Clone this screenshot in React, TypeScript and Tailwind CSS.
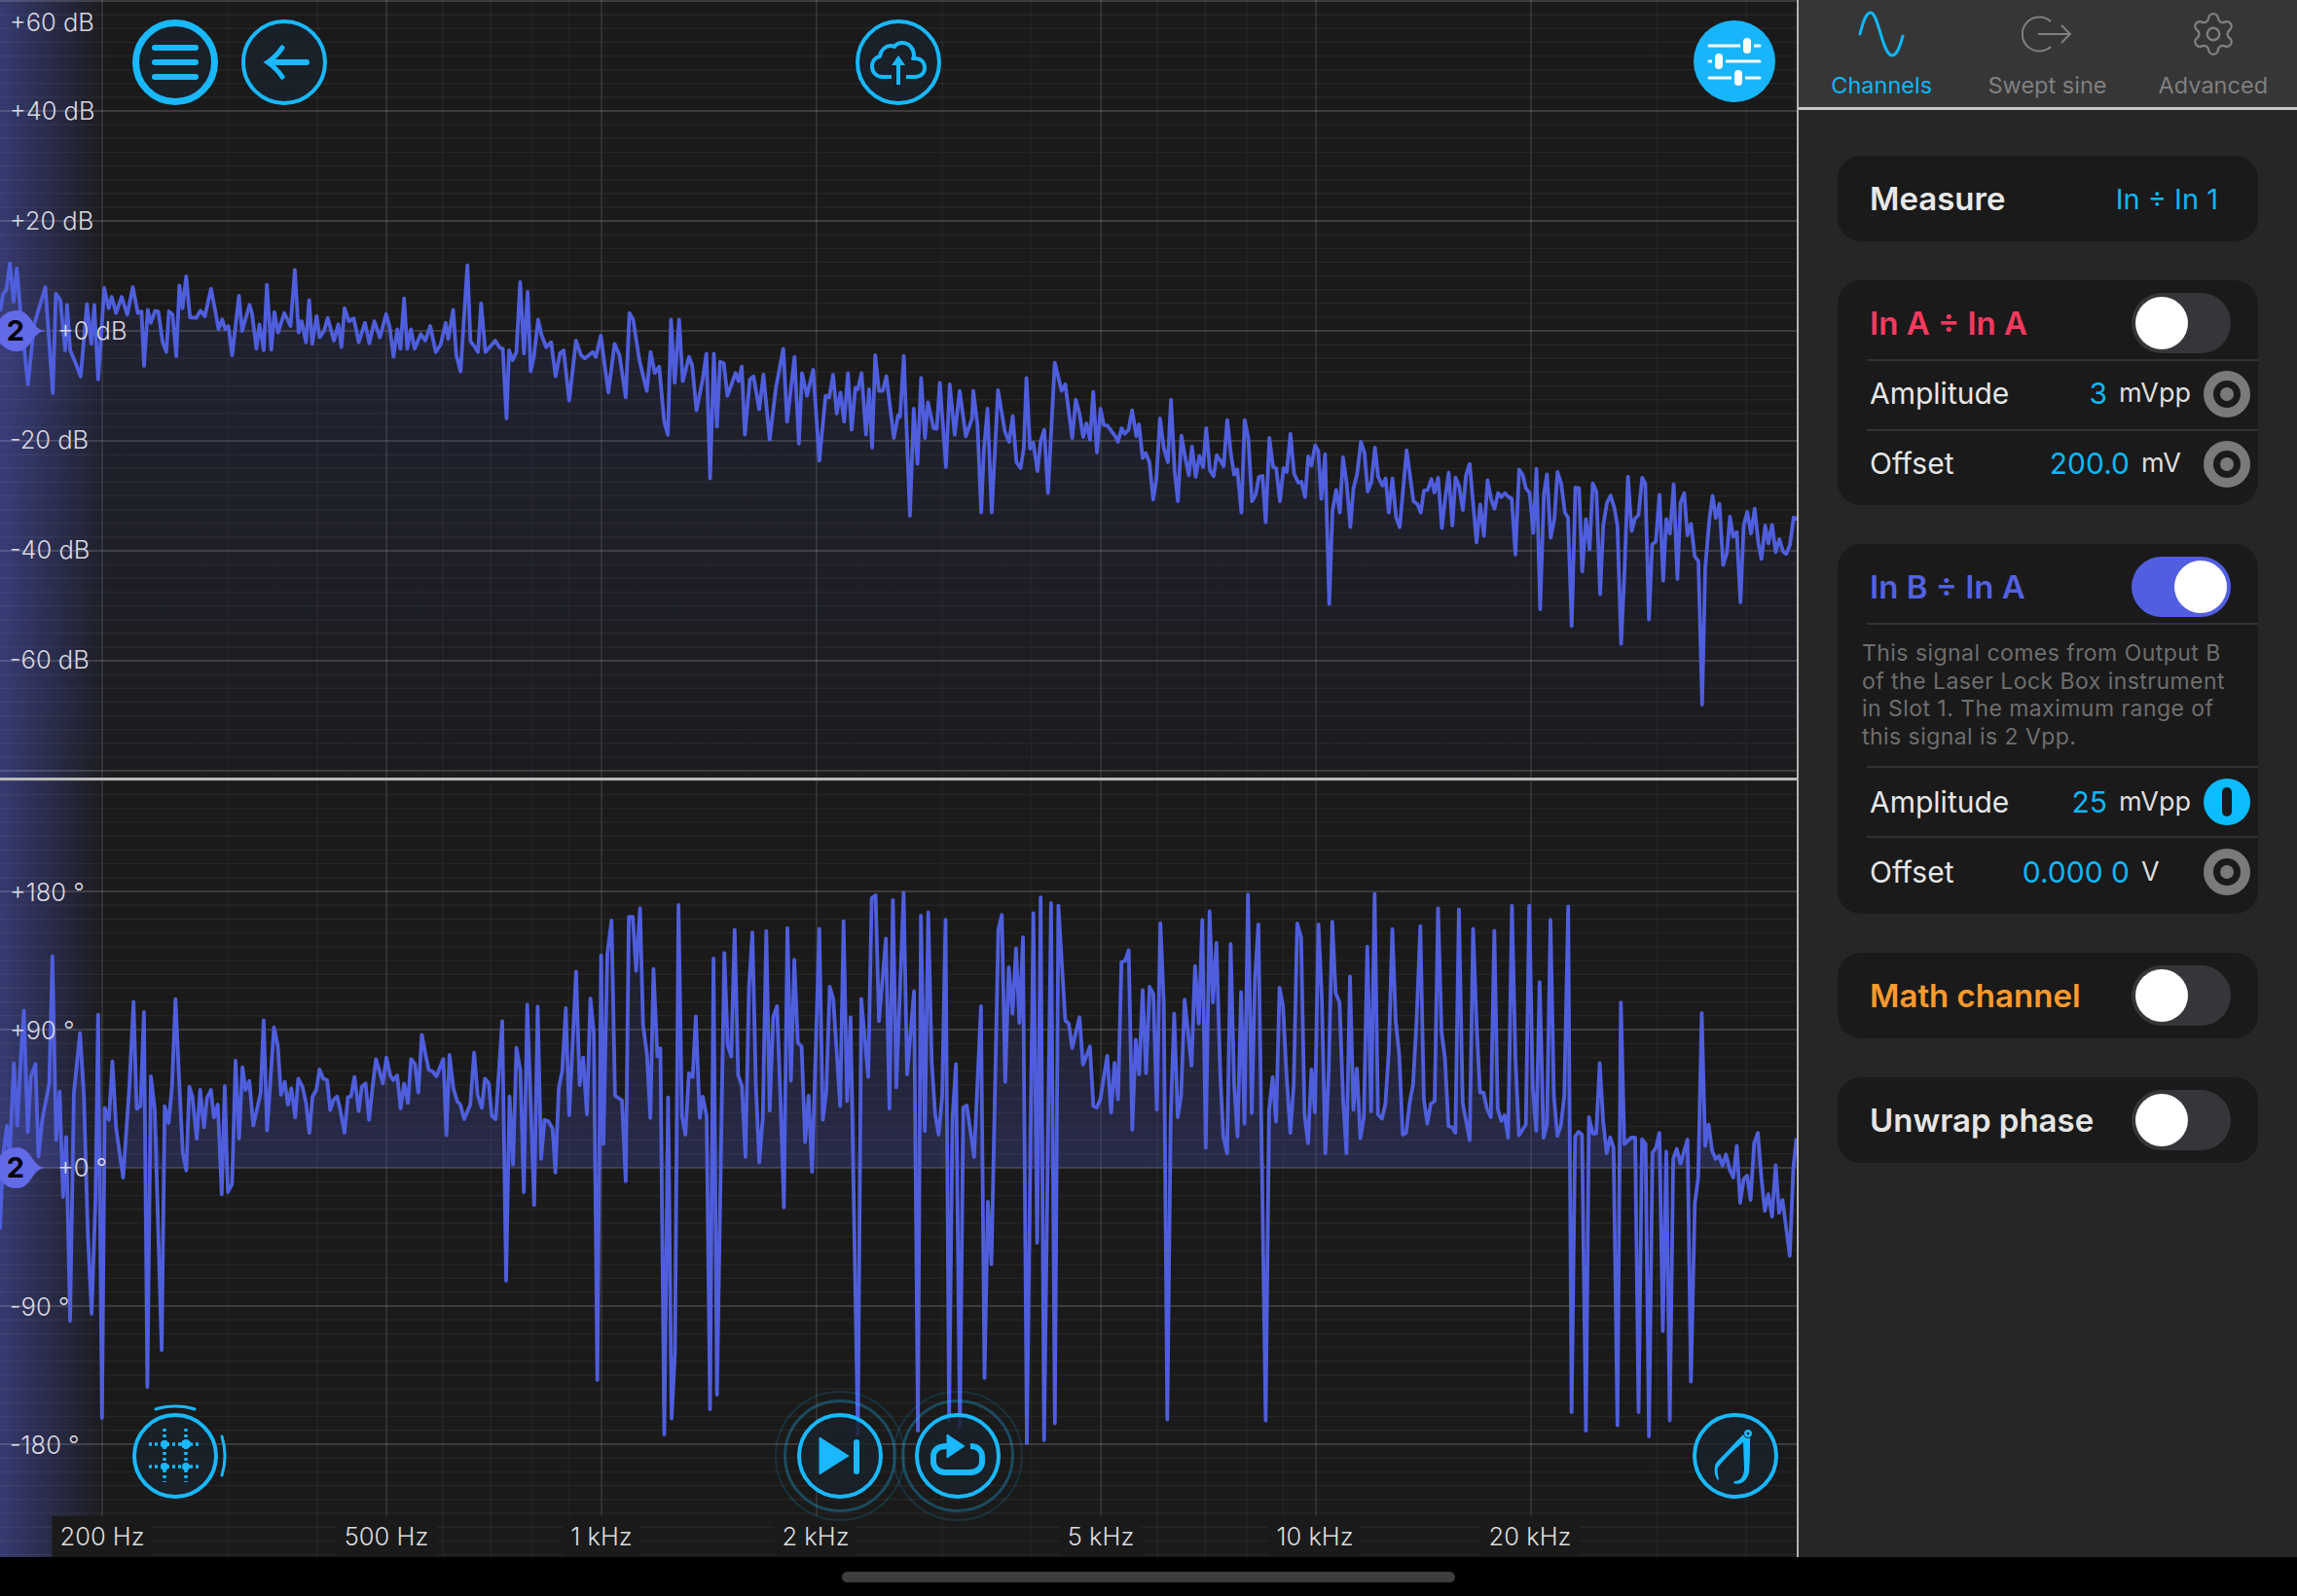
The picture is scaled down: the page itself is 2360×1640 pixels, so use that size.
import { ReactNode } from "react";
import { Settings } from "lucide-react";

// traces read off the reference, kept in crop coordinates and mapped to page pixels
const toPage = (raw: number[], sx: number, sy: number, ox: number, oy: number) => {
  const out: [number, number][] = [];
  for (let i = 0; i < raw.length; i += 2) out.push([raw[i] / sx + ox, raw[i + 1] / sy + oy]);
  return out;
};

const magA = [0,960,5,905,10,895,16,812,22,930,27,828,33,960,45,1185,55,1000,73,885,85,1212,90,905,97,925,105,1080,108,940,113,1080,122,1120,130,1160,140,937,147,1060,152,940,158,1170,168,888,175,950,180,915,187,965,196,915,205,970,214,885,222,965,228,960,232,1128,238,955,243,995,250,958,255,960,262,1055,268,1085,272,960,278,970,284,1098,289,880,294,950,300,852,306,978,316,980,323,958,330,975,340,890,348,970,352,1015,358,985,363,1015,368,1005,374,1095,385,912,390,1020,402,940,406,965,413,1075,418,1000,425,1080,430,878,437,1078,442,962,448,1025,458,965,468,1005,475,832,481,1025,486,990,493,1055,498,925,503,1060,510,975,515,1040,522,1020,528,980,538,1050,545,1000,550,1070,555,950,562,990,570,982,578,1055,588,995,595,1058,603,990,612,1040,622,968,628,1010,634,1100,640,1015,645,1075,651,920,656,1075,662,1015,668,1075,678,1030,685,1050,693,1005,702,1085,710,1062,718,995,722,1045,730,955,735,1095,742,1145,753,818,758,1052,765,1070,770,1085,775,935,782,1085,790,1068,798,1050,805,1072,810,1075,816,1290,820,1080,826,1110,832,1085,838,870,844,1090,850,900,855,1145,860,1100,867,985,872,1030,880,1070,888,1055,895,1160,902,1090,908,1080,917,1235,928,1050,936,1095,942,1105,955,1085,960,1100,968,1035,980,1210,990,1060,998,1095,1008,1225,1014,965,1020,985,1030,1110,1042,1205,1048,1085,1055,1150,1062,1130,1070,1300,1076,1340,1081,985,1087,1180,1094,985,1100,1175,1110,1100,1115,1125,1122,1265,1132,1170,1138,1090,1144,1475,1150,1090,1155,1315,1160,1115,1166,1120,1172,1220,1185,1150,1190,1175,1195,1130,1200,1340,1208,1170,1214,1160,1223,1262,1230,1155,1240,1355,1250,1195,1262,1075,1268,1300,1280,1100,1287,1368,1292,1150,1300,1220,1310,1140,1320,1420,1330,1220,1336,1225,1342,1155,1348,1275,1354,1210,1360,1300,1366,1150,1372,1325,1378,1195,1382,1200,1388,1150,1395,1340,1400,1200,1405,1380,1410,1095,1416,1205,1422,1205,1428,1160,1440,1350,1447,1280,1450,1285,1456,1097,1466,1590,1472,1260,1478,1430,1484,1165,1490,1350,1495,1240,1504,1320,1509,1322,1514,1180,1524,1440,1530,1185,1538,1340,1546,1205,1556,1345,1566,1290];
const magB = [0,305,8,410,15,680,20,490,27,360,35,680,47,303,60,430,68,462,75,383,82,525,90,543,96,480,101,265,108,483,114,465,122,552,128,460,135,425,142,620,155,218,168,305,175,285,188,450,195,332,202,375,209,447,215,405,222,455,228,308,235,495,242,360,248,410,255,412,270,445,275,462,282,420,288,437,295,425,302,365,310,445,315,408,322,512,328,497,335,525,342,640,348,580,355,390,362,480,370,525,376,332,383,555,389,645,396,443,403,510,410,565,416,477,423,570,430,505,437,540,443,420,450,550,457,568,463,503,470,520,476,537,483,395,490,500,496,563,502,547,510,680,516,395,523,450,530,645,537,625,543,570,550,567,556,710,563,450,570,540,576,543,583,645,590,543,596,555,603,438,610,560,618,588,624,585,631,632,637,507,643,535,650,473,656,490,662,638,669,500,677,962,683,675,690,610,697,680,703,510,710,590,717,725,723,605,730,560,737,462,744,495,750,615,757,585,764,480,770,570,778,597,784,575,790,680,797,575,804,695,811,725,824,488,837,645,845,655,851,680,857,612,864,610,871,577,877,618,884,573,891,728,898,630,904,557,911,720,917,572,924,600,931,672,937,565,944,530,957,772,964,655,971,752,978,580,985,640,991,668,998,620,1004,632,1011,620,1018,632,1024,637,1031,810,1038,547,1045,565,1051,605,1058,620,1065,743,1071,545,1078,978,1085,625,1091,562,1098,758,1105,700,1111,555,1118,590,1125,680,1131,695,1138,1030,1145,603,1152,605,1158,862,1165,700,1172,793,1178,590,1185,615,1192,932,1198,720,1205,650,1212,628,1219,665,1225,720,1232,1085,1238,880,1245,570,1252,737,1258,700,1265,688,1272,573,1278,590,1285,1010,1291,778,1298,770,1305,625,1312,890,1318,700,1325,745,1332,593,1339,885,1345,650,1352,620,1358,750,1365,715,1372,815,1379,830,1386,1272,1392,850,1400,700,1406,628,1412,697,1419,653,1426,842,1433,805,1439,693,1445,755,1452,740,1459,957,1465,720,1472,678,1479,745,1486,668,1493,775,1499,823,1506,720,1512,775,1519,718,1526,802,1533,762,1540,800,1546,808,1553,780,1560,695,1568,700];
const phaseA = [0,1090,8,860,18,770,25,870,36,578,45,770,52,600,62,415,72,790,80,620,92,580,100,865,110,750,128,640,136,248,146,815,155,665,164,990,172,805,182,1372,192,670,208,485,218,680,228,1100,238,1350,248,1000,255,428,265,1671,272,715,283,752,292,572,302,780,320,930,336,650,347,388,355,718,365,710,374,420,383,1575,392,618,402,720,420,1462,428,710,438,762,447,650,456,380,465,620,475,855,484,908,492,650,500,680,511,810,520,660,530,775,538,685,548,660,556,745,566,705,576,982,584,648,592,975,603,950,612,570,621,810,630,590,638,660,648,632,658,770,677,670,685,445,694,785,712,467,722,525,730,675,740,635,748,705,757,655,767,745,775,625,786,650,795,700,804,792,812,680,822,660,830,597,840,625,850,630,858,722,866,692,876,680,884,720,895,792,904,682,912,680,921,620,932,725,940,650,950,640,959,752,968,650,977,565,995,640,1004,560,1014,615,1022,630,1032,615,1041,717,1050,640,1060,700,1068,565,1078,580,1087,668,1096,490,1104,540,1114,598,1124,603,1134,618,1152,565,1160,800,1168,552,1178,655,1188,695,1196,705,1206,750,1222,705,1232,545,1241,675,1252,715,1260,625,1270,640,1278,740,1288,750,1305,448,1315,1248,1324,680,1333,890,1342,530,1352,600,1361,975,1370,397,1388,1015,1397,403,1406,872,1415,752,1425,757,1436,780,1443,915,1452,655,1461,600,1470,408,1479,738,1497,295,1506,645,1515,560,1525,735,1534,378,1543,485,1552,1554,1562,245];
const phaseB = [0,720,10,210,21,120,30,590,48,603,58,820,66,110,76,110,85,255,95,87,103,400,113,480,122,650,130,250,140,485,148,463,158,1500,168,595,177,1457,186,1280,195,78,204,645,213,695,222,530,232,540,240,377,250,650,258,593,268,645,277,1432,286,222,295,1393,314,207,323,455,332,485,341,145,350,535,360,565,369,755,378,300,387,152,396,560,405,770,414,650,423,148,432,630,441,380,451,350,460,600,469,890,478,140,487,550,496,225,505,448,515,458,524,715,533,590,542,795,561,142,570,655,579,580,588,298,597,330,615,618,624,122,633,605,642,380,661,1500,670,330,688,540,697,60,707,52,716,390,734,168,743,625,752,65,761,568,780,45,789,533,807,310,817,1490,825,107,835,685,844,98,853,500,862,640,871,695,880,590,889,118,898,1462,907,650,916,505,926,1480,935,622,944,617,963,755,981,350,990,1348,999,875,1008,1043,1026,145,1035,105,1044,553,1053,245,1063,370,1072,195,1081,395,1090,165,1100,1523,1117,100,1127,985,1136,58,1145,1515,1163,73,1173,1470,1182,80,1200,388,1209,397,1218,462,1237,380,1246,507,1264,458,1273,618,1282,622,1291,600,1309,483,1319,636,1328,502,1337,600,1346,232,1355,228,1365,200,1374,682,1383,440,1392,533,1401,307,1410,530,1419,298,1429,318,1438,628,1447,127,1456,340,1465,1460,1474,650,1483,370,1492,648,1501,590,1510,332,1528,510,1537,242,1547,397,1556,118,1565,730];
const phaseC = [32,95,41,340,50,180,60,530,68,700,78,745,87,183,96,560,105,700,114,312,123,665,132,50,142,637,150,280,159,130,168,750,178,1462,187,630,196,540,205,660,214,300,223,350,232,530,242,690,251,560,260,128,270,165,279,640,288,718,297,520,306,635,315,130,324,330,333,745,342,520,351,123,360,315,370,340,379,600,388,745,397,270,406,628,415,518,424,705,433,650,442,190,452,632,461,48,470,640,480,652,489,612,498,470,507,143,516,390,525,480,534,695,543,690,552,610,561,560,570,390,580,135,589,600,598,665,607,612,617,605,626,87,635,420,644,490,653,672,662,675,671,690,680,90,690,610,708,710,717,142,726,400,735,582,744,582,753,625,763,648,772,147,781,625,790,658,799,643,808,703,818,80,827,490,836,697,854,668,863,80,872,570,881,685,890,285,900,703,909,668,918,118,927,590,936,698,945,670,954,590,964,82,973,1440,982,700,991,687,1000,695,1010,1490,1018,648,1028,692,1037,692,1046,503,1055,660,1064,745,1073,702,1082,730,1092,1475,1101,340,1110,720,1128,703,1138,703,1147,1440,1156,707,1165,720,1174,1505,1183,743,1192,730,1201,690,1210,1222,1219,740,1228,1462,1237,760,1246,733,1256,773,1274,708,1283,1358,1293,880,1302,810,1311,368,1320,725,1329,668,1338,738,1347,760,1356,752,1365,778,1374,748,1384,790,1393,810,1402,725,1411,878,1420,815,1429,805,1438,870,1447,718,1457,690,1466,810,1475,900,1484,855,1494,915,1503,777,1512,905,1521,870,1540,1020,1549,785,1557,705];

const magPts = [...toPage(magA, 1.568, 3, 0, 0), ...toPage(magB, 1.851, 3, 1000, 300)];
const phasePts = [
  ...toPage(phaseA, 2.529, 3, 0, 900),
  ...toPage(phaseB, 2.529, 2.613, 620, 900),
  ...toPage(phaseC, 2.529, 2.613, 1230, 900),
];

const line = (pts: [number, number][]) => pts.map(([x, y]) => `${x.toFixed(1)},${y.toFixed(1)}`).join(" ");
const fx = (f: number) => 618 + Math.log10(f / 1000) * 734;

const majorHz = [200, 500, 1000, 2000, 5000, 10000, 20000];
const minorHz = [300, 400, 600, 700, 800, 900, 3000, 4000, 6000, 7000, 8000, 9000, 30000, 40000];

function Grid({ y0, y1, start, step, every }: { y0: number; y1: number; start: number; step: number; every: number }) {
  const rows: ReactNode[] = [];
  for (let i = 0; ; i++) {
    const y = start + i * step;
    if (y > y1) break;
    if (y < y0) continue;
    const major = i % every === 0;
    rows.push(<line key={i} x1={0} x2={1846} y1={y} y2={y} stroke="#fff" strokeOpacity={major ? 0.15 : 0.05} strokeWidth={major ? 2 : 1.5} />);
  }
  return (
    <g>
      {rows}
      {minorHz.map((f) => (
        <line key={f} x1={fx(f)} x2={fx(f)} y1={y0} y2={y1} stroke="#fff" strokeOpacity={0.04} strokeWidth={1.5} />
      ))}
      {majorHz.map((f) => (
        <line key={f} x1={fx(f)} x2={fx(f)} y1={y0} y2={y1} stroke="#fff" strokeOpacity={0.13} strokeWidth={1.5} />
      ))}
    </g>
  );
}

function Badge({ className }: { className: string }) {
  return (
    <div className={`absolute left-0 w-[46px] h-[42px] flex items-center ${className}`}>
      <svg className="absolute inset-0" width="46" height="42" viewBox="0 0 46 42">
        <path d="M-4 21a21 21 0 0 1 21-21c8 0 12 5 16 11 3 5 7 9 13 10-6 1-10 5-13 10-4 6-8 11-16 11A21 21 0 0 1-4 21z" fill="#636ae8" />
      </svg>
      <span className="relative w-[32px] text-center text-[29px] font-bold text-black">2</span>
    </div>
  );
}

function AxisLabel({ className, children }: { className: string; children: ReactNode }) {
  return (
    <span className={`absolute -translate-y-1/2 text-[25.5px] font-light leading-none text-[#d8d8e0] whitespace-nowrap ${className}`}>
      {children}
    </span>
  );
}

function FreqLabel({ className, children }: { className: string; children: ReactNode }) {
  return (
    <span className={`absolute bottom-0 h-[42px] -translate-x-1/2 flex items-center px-2 bg-[#1a1a1a] text-[25.5px] font-light text-[#dcdcdc] whitespace-nowrap ${className}`}>
      {children}
    </span>
  );
}

function RoundButton({ className, thick, children }: { className: string; thick?: boolean; children: ReactNode }) {
  return (
    <button className={`absolute w-[88px] h-[88px] rounded-full bg-[#1a222b]/85 border-[#19b8ff] ${thick ? "border-[7px]" : "border-[4px]"} ${className}`}>
      {children}
    </button>
  );
}

function Toggle({ on }: { on?: boolean }) {
  return (
    <div className={`w-[102px] h-[62px] rounded-full flex items-center px-[4px] ${on ? "bg-[#515ee0] justify-end" : "bg-[#36363a] justify-start"}`}>
      <div className="w-[54px] h-[54px] rounded-full bg-white" />
    </div>
  );
}

function Knob({ active }: { active?: boolean }) {
  if (active) {
    return (
      <div className="w-[48px] h-[48px] rounded-full bg-[#0bbcff] flex items-center justify-center">
        <div className="w-[10px] h-[30px] rounded-full bg-[#1a1a1a]" />
      </div>
    );
  }
  return (
    <div className="w-[48px] h-[48px] rounded-full bg-[#7a7a7a] flex items-center justify-center">
      <div className="w-[28px] h-[28px] rounded-full bg-[#1a1a1a] flex items-center justify-center">
        <div className="w-[14px] h-[14px] rounded-full bg-[#7a7a7a]" />
      </div>
    </div>
  );
}

function ParamRow({ label, value, unit, active, wide, raised }: { label: string; value: string; unit: string; active?: boolean; wide?: boolean; raised?: boolean }) {
  return (
    <div className={`ml-[30px] h-[72px] flex items-center pr-[8px] border-t-2 border-[#323232] ${raised ? "pb-[3px]" : ""}`}>
      <span className="ml-[3px] flex-1 text-[30px] text-[#e6e6e6]">{label}</span>
      <span className="text-[30px] text-[#0fb7f5]">{value}</span>
      <span className={`ml-[12px] text-[27px] text-[#dedede] ${wide ? "w-[72px]" : "w-[49px]"}`}>{unit}</span>
      <div className="ml-[15px]">
        <Knob active={active} />
      </div>
    </div>
  );
}

function TitleRow({ title, color, on, header }: { title: string; color: string; on?: boolean; header?: boolean }) {
  return (
    <div className={`flex items-center justify-between pl-[33px] pr-[28px] ${header ? "h-[81px] pt-[7px]" : "h-[88px]"}`}>
      <span className={`text-[33px] font-semibold ${header ? "mt-[2px]" : "mt-[1px]"} ${color}`}>{title}</span>
      <Toggle on={on} />
    </div>
  );
}

function Tab({ label, active, children }: { label: string; active?: boolean; children: ReactNode }) {
  return (
    <div className={`flex-1 flex flex-col items-center ${active ? "text-[#0fb7f5]" : "text-[#808080]"}`}>
      <div className="h-[70px] flex items-center justify-center">{children}</div>
      <span className="text-[23.5px] leading-[36px]">{label}</span>
    </div>
  );
}

export default function App() {
  const magFill = `0,799 ${line(magPts)} 1846,799`;
  const phaseFill = `0,1200 ${line(phasePts.map(([x, y]) => [x, Math.min(y, 1200)] as [number, number]))} 1846,1200`;

  return (
    <div className="w-[2360px] h-[1640px] flex flex-col bg-black font-['Inter',sans-serif] overflow-hidden">
      <div className="flex-1 flex min-h-0">
        {/* Charts */}
        <div className="relative w-[1846px] flex flex-col bg-[#1a1a1a]">
          <div className="relative h-[799px] overflow-hidden">
            <div className="absolute inset-y-0 left-0 w-[110px] bg-gradient-to-r from-[#363a70] to-transparent" />
            <svg className="absolute inset-0" width="1846" height="799" viewBox="0 0 1846 799">
              <defs>
                <linearGradient id="magFade" gradientUnits="userSpaceOnUse" x1="0" y1="340" x2="0" y2="799">
                  <stop offset="0" stopColor="#505fdc" stopOpacity="0.11" />
                  <stop offset="1" stopColor="#505fdc" stopOpacity="0.02" />
                </linearGradient>
              </defs>
              <Grid y0={0} y1={799} start={1} step={14.125} every={8} />
              <polygon points={magFill} fill="url(#magFade)" />
              <polyline points={line(magPts)} fill="none" stroke="#4f5edc" strokeWidth="3.8" strokeLinejoin="round" />
            </svg>
            <AxisLabel className="left-[10px] top-[23px]">+60 dB</AxisLabel>
            <AxisLabel className="left-[10px] top-[114px]">+40 dB</AxisLabel>
            <AxisLabel className="left-[10px] top-[227px]">+20 dB</AxisLabel>
            <AxisLabel className="left-[59px] top-[340px]">+0 dB</AxisLabel>
            <AxisLabel className="left-[10px] top-[452px]">-20 dB</AxisLabel>
            <AxisLabel className="left-[10px] top-[565px]">-40 dB</AxisLabel>
            <AxisLabel className="left-[10px] top-[678px]">-60 dB</AxisLabel>
            <Badge className="top-[319px]" />

            <RoundButton thick className="left-[136px] top-[20px]">
              <svg className="absolute -inset-[7px]" width="88" height="88" viewBox="0 0 88 88" fill="none">
                <path d="M23 29h42M23 44h42M23 59h42" stroke="#19b8ff" strokeWidth="6" strokeLinecap="round" />
              </svg>
            </RoundButton>
            <RoundButton className="left-[248px] top-[20px]">
              <svg className="absolute -inset-[4px]" width="88" height="88" viewBox="0 0 88 88" fill="none">
                <path d="M29 44h38" stroke="#19b8ff" strokeWidth="6" strokeLinecap="round" />
                <path d="M42 29c-4 6-9 11-15 15 6 4 11 9 15 15" stroke="#19b8ff" strokeWidth="5" strokeLinecap="round" />
              </svg>
            </RoundButton>
            <RoundButton className="left-[879px] top-[20px]">
              <svg className="absolute -inset-[4px]" width="88" height="88" viewBox="0 0 88 88" fill="none">
                <g transform="translate(0 2)">
                  <path d="M37 57H28c-7 0-11-5-11-11 0-5 3-9 8-10 1-7 6-11 12-11 1 0 2 0 3 1 2-3 5-4 8-4 7 0 12 6 12 13 0 1 0 2-1 3h2c6 0 10 4 10 10 0 5-4 9-10 9h-9" stroke="#19b8ff" strokeWidth="4" strokeLinejoin="round" />
                  <path d="M44 65V42" stroke="#19b8ff" strokeWidth="4" />
                  <path d="M37 45l7-10 7 10z" fill="#19b8ff" />
                </g>
              </svg>
            </RoundButton>
            <button className="absolute left-[1740px] top-[21px] w-[84px] h-[84px] rounded-full bg-[#19b5fb]">
              <svg className="absolute inset-0" width="84" height="84" viewBox="0 0 84 84" fill="none">
                <path d="M16 26h52M16 42h52M16 59h52" stroke="#fff" strokeWidth="3" strokeLinecap="round" />
                <rect x="48" y="15" width="14" height="22" fill="#19b5fb" />
                <rect x="19" y="31" width="14" height="22" fill="#19b5fb" />
                <rect x="39" y="48" width="14" height="22" fill="#19b5fb" />
                <rect x="51" y="18" width="8" height="16" rx="4" fill="#fff" />
                <rect x="22" y="34" width="8" height="16" rx="4" fill="#fff" />
                <rect x="42" y="51" width="8" height="16" rx="4" fill="#fff" />
              </svg>
            </button>
          </div>

          <div className="h-[3px] bg-[#b8b8b8]" />

          <div className="relative flex-1 overflow-hidden">
            <div className="absolute inset-y-0 left-0 w-[110px] bg-gradient-to-r from-[#363a70] to-transparent" />
            <svg className="absolute inset-0" width="1846" height="798" viewBox="0 802 1846 798">
              <defs>
                <linearGradient id="phaseFade" gradientUnits="userSpaceOnUse" x1="0" y1="950" x2="0" y2="1200">
                  <stop offset="0" stopColor="#555fe1" stopOpacity="0.05" />
                  <stop offset="1" stopColor="#555fe1" stopOpacity="0.24" />
                </linearGradient>
              </defs>
              <Grid y0={802} y1={1600} start={774} step={14.2} every={10} />
              <polygon points={phaseFill} fill="url(#phaseFade)" />
              <polyline points={line(phasePts)} fill="none" stroke="#4f5edc" strokeWidth="3.8" strokeLinejoin="round" />
            </svg>
            <AxisLabel className="left-[10px] top-[115px]">+180 °</AxisLabel>
            <AxisLabel className="left-[10px] top-[257px]">+90 °</AxisLabel>
            <AxisLabel className="left-[59px] top-[398px]">+0 °</AxisLabel>
            <AxisLabel className="left-[10px] top-[541px]">-90 °</AxisLabel>
            <AxisLabel className="left-[10px] top-[683px]">-180 °</AxisLabel>
            <Badge className="top-[377px]" />

            <FreqLabel className="left-[105px]">200 Hz</FreqLabel>
            <FreqLabel className="left-[397px]">500 Hz</FreqLabel>
            <FreqLabel className="left-[618px]">1 kHz</FreqLabel>
            <FreqLabel className="left-[838px]">2 kHz</FreqLabel>
            <FreqLabel className="left-[1131px]">5 kHz</FreqLabel>
            <FreqLabel className="left-[1351px]">10 kHz</FreqLabel>
            <FreqLabel className="left-[1572px]">20 kHz</FreqLabel>

            <RoundButton className="left-[136px] top-[650px]">
              <svg className="absolute -inset-[4px] overflow-visible" width="88" height="88" viewBox="0 0 88 88" fill="none">
                <path d="M24 -4c12-4 28-4 40 0" stroke="#19b8ff" strokeWidth="3" strokeLinecap="round" />
                <path d="M92 24c4 13 4 27 0 40" stroke="#19b8ff" strokeWidth="3" strokeLinecap="round" />
                <path d="M33 16v55M55 16v55M17 32h54M17 55h54" stroke="#19b8ff" strokeWidth="3.5" strokeDasharray="3 3" />
                <circle cx="33" cy="32" r="4" fill="#19b8ff" />
                <circle cx="55" cy="32" r="5" fill="#19b8ff" />
                <circle cx="33" cy="55" r="4" fill="#19b8ff" />
                <circle cx="55" cy="55" r="4" fill="#19b8ff" />
              </svg>
            </RoundButton>

            <div className="absolute left-[796px] top-[627px] w-[134px] h-[134px] rounded-full border-[2px] border-[#19b8ff]/15" />
            <div className="absolute left-[805px] top-[636px] w-[116px] h-[116px] rounded-full border-[3px] border-[#19b8ff]/30" />
            <RoundButton className="left-[819px] top-[650px]">
              <svg className="absolute -inset-[4px]" width="88" height="88" viewBox="0 0 88 88" fill="none">
                <path d="M23 25v38c10-6 20-13 30-19z" fill="#19b8ff" stroke="#19b8ff" strokeWidth="1" strokeLinejoin="round" />
                <path d="M61 30v30" stroke="#19b8ff" strokeWidth="6" strokeLinecap="round" />
              </svg>
            </RoundButton>

            <div className="absolute left-[917px] top-[627px] w-[134px] h-[134px] rounded-full border-[2px] border-[#19b8ff]/15" />
            <div className="absolute left-[926px] top-[636px] w-[116px] h-[116px] rounded-full border-[3px] border-[#19b8ff]/30" />
            <RoundButton className="left-[940px] top-[650px]">
              <svg className="absolute -inset-[4px]" width="88" height="88" viewBox="0 0 88 88" fill="none">
                <path d="M39 34h-7c-8 0-13 4-13 11v5c0 6 5 11 12 11h26c7 0 12-5 12-11v-5c0-6-4-11-12-11" stroke="#19b8ff" strokeWidth="6" />
                <path d="M33 22l18 12-18 12z" fill="#19b8ff" stroke="#19b8ff" strokeWidth="1" strokeLinejoin="round" />
              </svg>
            </RoundButton>

            <RoundButton className="left-[1739px] top-[650px]">
              <svg className="absolute -inset-[4px]" width="88" height="88" viewBox="0 0 88 88">
                <path d="M55 19c2-1 4 0 4 2 0 15 0 28-1 40-1 5-4 9-8 11-3 1-6 1-8 0l1-2c3 0 5-1 7-3 2-3 3-6 3-10l-1-27C42 38 32 48 26 56c-1 4 0 8 1 12l-1 1c-3-4-4-9-3-14 0-3 2-5 4-7 9-9 18-19 28-29z" fill="#19b8ff" />
                <circle cx="57" cy="21" r="4.5" fill="#19b8ff" stroke="#1a222b" strokeWidth="1" />
                <circle cx="57" cy="21" r="1.3" fill="#1a222b" />
              </svg>
            </RoundButton>
          </div>
        </div>

        <div className="w-[2px] bg-[#b4b4b4]" />

        {/* Sidebar */}
        <div className="flex-1 flex flex-col bg-[#262626]">
          <div className="h-[113px] flex bg-[#363636] border-b-[3px] border-[#c8c8c8] pr-[1px]">
            <Tab label="Channels" active>
              <svg width="48" height="48" viewBox="0 0 48 48" fill="none" stroke="currentColor" strokeWidth="3" strokeLinecap="round">
                <path d="M2 24C5 12 8 2 13 2c8 0 12 44 22 44 5 0 8-9 11-20" />
              </svg>
            </Tab>
            <Tab label="Swept sine">
              <svg width="52" height="40" viewBox="0 0 52 40" fill="none" stroke="currentColor" strokeWidth="2">
                <path d="M30 7A17.500 17.500 0 1 0 30 33" />
                <path d="M17 20h33M41 11l9 9-9 9" />
              </svg>
            </Tab>
            <Tab label="Advanced">
              <Settings size={50} strokeWidth={1.1} />
            </Tab>
          </div>

          <div className="flex flex-col gap-[40px] pl-[40px] pr-[40px] pt-[47px]">
            <div className="h-[88px] rounded-[24px] bg-[#1a1a1a] flex items-center justify-between pl-[33px] pr-[41px]">
              <span className="mt-[1px] text-[33px] font-semibold text-[#e8e8e8]">Measure</span>
              <span className="mt-[2px] text-[29px] text-[#0fb7f5]">In ÷ In 1</span>
            </div>

            <div className="rounded-[24px] bg-[#1a1a1a] flex flex-col pb-[6px]">
              <TitleRow header title="In A ÷ In A" color="text-[#f83a5f]" />
              <ParamRow raised label="Amplitude" value="3" unit="mVpp" wide />
              <ParamRow raised label="Offset" value="200.0" unit="mV" />
            </div>

            <div className="rounded-[24px] bg-[#1a1a1a] flex flex-col pb-[8px]">
              <TitleRow header title="In B ÷ In A" color="text-[#5361e3]" on />
              <div className="ml-[30px] h-[147px] pt-[15px] border-t-2 border-[#323232]">
                <p className="-ml-[5px] w-[385px] text-[23px] tracking-[0.45px] leading-[28.6px] text-[#6e6e6e]">
                  This signal comes from Output B of the Laser Lock Box instrument in Slot 1. The maximum range of this signal is 2 Vpp.
                </p>
              </div>
              <ParamRow label="Amplitude" value="25" unit="mVpp" wide active />
              <ParamRow label="Offset" value="0.000 0" unit="V" />
            </div>

            <div className="rounded-[24px] bg-[#1a1a1a]">
              <TitleRow title="Math channel" color="text-[#ff9a2e]" />
            </div>

            <div className="rounded-[24px] bg-[#1a1a1a]">
              <TitleRow title="Unwrap phase" color="text-[#e5e5e5]" />
            </div>
          </div>
        </div>
      </div>

      {/* Home indicator */}
      <div className="h-[40px] flex items-center justify-center bg-black">
        <div className="w-[630px] h-[11px] rounded-full bg-[#3d3d3d]" />
      </div>
    </div>
  );
}
